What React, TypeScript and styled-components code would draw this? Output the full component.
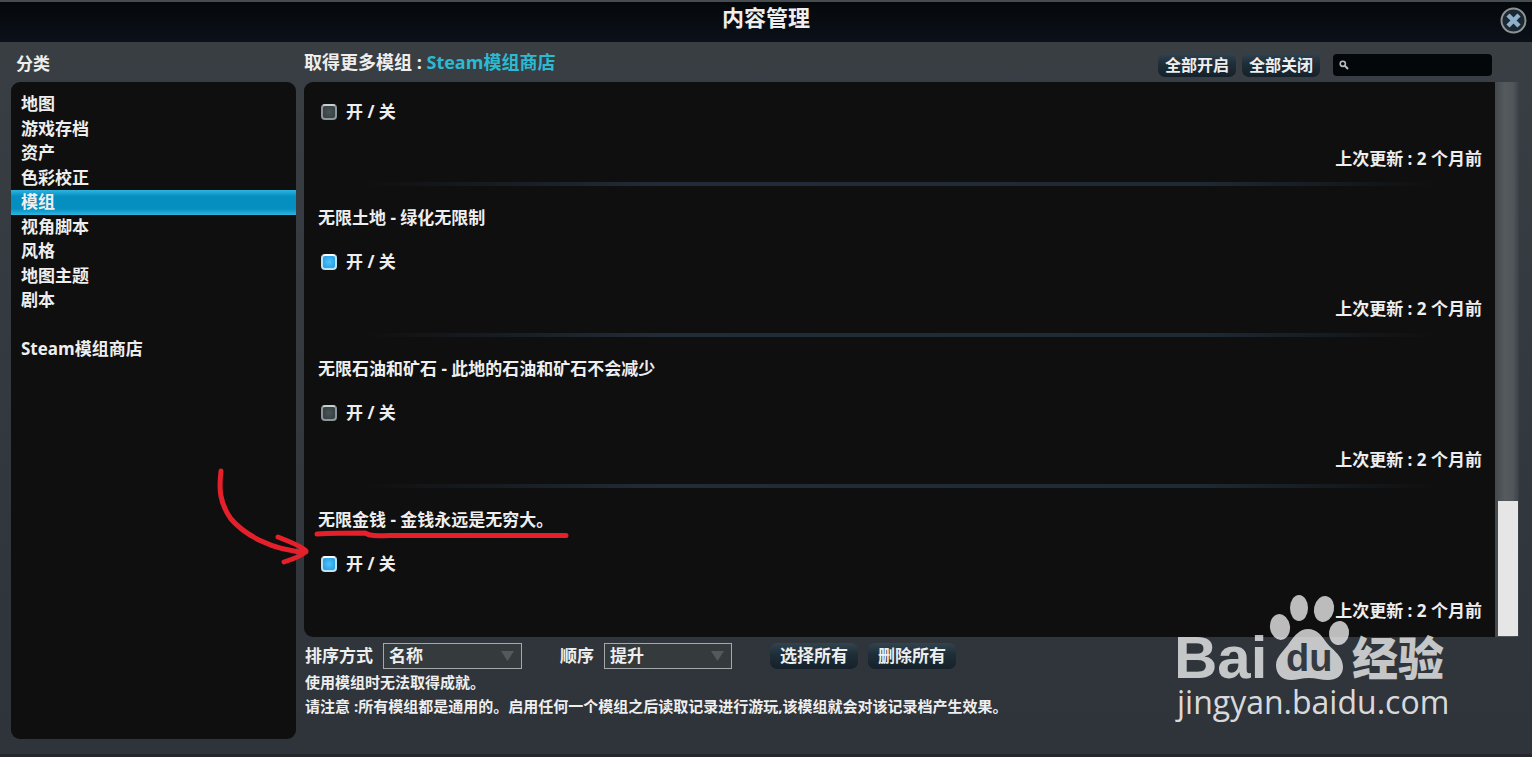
import React, { useState } from 'react';
import styled, { createGlobalStyle } from 'styled-components';

const Global = createGlobalStyle`
  *, *::before, *::after { box-sizing: border-box; }
  body {
    margin: 0;
    background: #30363c;
    color: #eeeeee;
    font-family: "Open Sans", "Noto Sans CJK SC", sans-serif;
    font-size: 17px;
    font-weight: 700;
    line-height: 24px;
  }
  button, input, select { font: inherit; color: inherit; margin: 0; }
  h1, h2, p, ul { margin: 0; padding: 0; font: inherit; list-style: none; }
`;

const Window = styled.div`
  position: relative;
  display: flex;
  flex-direction: column;
  min-height: 100vh;
  overflow: hidden;
  border-bottom: 3px solid #24282d;
  background: linear-gradient(#393f43, #30363c 75%, #2f343b);
`;

const TitleBar = styled.header`
  display: grid;
  grid-template-columns: 1fr auto 1fr;
  align-items: center;
  height: 42px;
  padding: 0 5px;
  border-top: 2px solid #474c50;
  background: linear-gradient(#05080b, #0b1119);
`;

const Title = styled.h1`
  grid-column: 2;
  padding-bottom: 10px;
  font-size: 22px;
  line-height: 28px;
`;

const CloseButton = styled.button`
  justify-self: end;
  width: 27px;
  height: 31px;
  padding: 0 0 4px;
  border: 0;
  background: none;
  svg { display: block; }
`;

const Body = styled.div`
  flex: 1;
  display: grid;
  grid-template-columns: 285px minmax(0, 1fr);
  column-gap: 8px;
  padding: 0 13px 15px 11px;
`;

const Column = styled.div`
  display: flex;
  flex-direction: column;
`;

const Heading = styled.h2`
  height: 40px;
  padding: 10px 5px 0;
`;

const CategoryPanel = styled.nav`
  flex: 1;
  padding: 10px 0;
  border-radius: 9px;
  background: #0f0f0f;
`;

const CategoryList = styled.div`
  display: grid;
  grid-template-rows: repeat(11, 1fr);
  height: 270px;
  a:last-child { grid-row: 11; }
`;

const Category = styled.a<{ $active?: boolean }>`
  padding-left: 10px;
  color: inherit;
  text-decoration: none;
  background: ${p => (p.$active ? 'linear-gradient(#2fb4e0, #048fc0 25%, #048fc0 75%, #2fb4e0)' : 'none')};
`;

const Toolbar = styled.div`
  display: flex;
  align-items: center;
  height: 40px;
  padding: 6px 27px 0 0;
`;

const StoreLine = styled.p`
  margin: 0 auto 6px 0;
  font-size: 18px;
  a { color: #2cb9d2; text-decoration: none; }
`;

const PillButton = styled.button<{ $small?: boolean }>`
  height: ${p => (p.$small ? 24 : 26)}px;
  margin-right: ${p => (p.$small ? 6 : 10)}px;
  padding: 0 ${p => (p.$small ? 7 : 10)}px;
  border: 0;
  border-radius: 7px;
  background: linear-gradient(#31444f, #1e2d37 45%, #15212a);
  font-size: ${p => (p.$small ? 16 : 17)}px;
  line-height: 24px;
`;

const Search = styled.label`
  display: flex;
  align-items: center;
  gap: 4px;
  width: 159px;
  height: 22px;
  margin-left: 7px;
  padding: 0 6px;
  border-radius: 4px;
  background: #04070a;
  input {
    flex: 1;
    min-width: 0;
    border: 0;
    outline: 0;
    background: none;
    font-size: 14px;
  }
`;

const ListArea = styled.div`
  flex: 1;
  display: flex;
`;

const ModList = styled.ul`
  flex: 1;
  border-radius: 9px 0 0 9px;
  background: #0f0f0f;
`;

const ModRow = styled.li<{ $first?: boolean; $last?: boolean }>`
  display: flex;
  flex-direction: column;
  height: ${p => (p.$first ? 104 : p.$last ? 149 : 151)}px;
  padding: ${p => (p.$first ? 18 : 20)}px 13px 0 14px;
  background: ${p => (p.$last ? 'none' : 'linear-gradient(90deg, transparent 5%, #222c38 30%, #1e2a34 75%, transparent 95%) bottom / 100% 4px no-repeat')};
`;

const ModName = styled.h2`
  height: 24px;
  margin-bottom: 20px;
`;

const Toggle = styled.label`
  display: flex;
  align-items: center;
  align-self: flex-start;
  gap: 9px;
  height: 24px;
  padding-left: 3px;
`;

const CheckBox = styled.input`
  appearance: none;
  width: 16px;
  height: 16px;
  border: 2px solid #8d9698;
  border-top-color: #c9d0d2;
  border-radius: 4px;
  background: radial-gradient(#4a5558, #333d40);
  &:checked {
    border-color: #bfe2f5;
    border-top-color: #fff;
    background: radial-gradient(#4fc4fb, #2197e2);
  }
`;

const Updated = styled.p`
  align-self: flex-end;
  margin-top: 23px;
`;

const ScrollTrack = styled.div`
  display: flex;
  align-items: flex-end;
  width: 24px;
  padding: 0 1px 1px 3px;
  background: linear-gradient(90deg, #43494d, #555a5d 40%, #50565a 75%, #3a4046);
`;

const ScrollThumb = styled.div`
  width: 20px;
  height: 135px;
  background: #e6e6e6;
`;

const Footer = styled.footer`
  padding: 5px 1px 21px;
`;

const SortBar = styled.div`
  display: flex;
  align-items: center;
  height: 28px;
`;

const SortField = styled.label`
  display: flex;
  align-items: center;
  gap: 10px;
  margin-right: 38px;
  white-space: nowrap;
`;

const SelectBox = styled.span<{ $width: number }>`
  position: relative;
  width: ${p => p.$width}px;
  height: 26px;
  select {
    appearance: none;
    display: block;
    width: 100%;
    height: 26px;
    padding: 0 5px;
    border: 1px solid #a5a8aa;
    border-radius: 0;
    background: #353a3c;
    line-height: 24px;
  }
  svg { position: absolute; right: 8px; top: 8px; pointer-events: none; }
`;

const Note = styled.p`
  height: 24px;
  font-size: 15px;
`;

const Annotation = styled.svg`
  position: absolute;
  left: 200px;
  top: 460px;
  pointer-events: none;
`;

const Watermark = styled.svg`
  position: absolute;
  right: 74px;
  top: 592px;
  pointer-events: none;
`;

const mods = [
  { name: '', on: false },
  { name: '无限土地 - 绿化无限制', on: true },
  { name: '无限石油和矿石 - 此地的石油和矿石不会减少', on: false },
  { name: '无限金钱 - 金钱永远是无穷大。', on: true },
];

const categories = ['地图', '游戏存档', '资产', '色彩校正', '模组', '视角脚本', '风格', '地图主题', '剧本', 'Steam模组商店'];

const Caret = () => (
  <svg width="13" height="10" viewBox="0 0 13 10"><path d="M0 0h13L6.500 10z" fill="#54595c" /></svg>
);

function Mod({ name, on, last }: { name: string; on: boolean; last: boolean }) {
  const [checked, setChecked] = useState(on);
  return (
    <ModRow $first={!name} $last={last}>
      {name && <ModName>{name}</ModName>}
      <Toggle>
        <CheckBox type="checkbox" checked={checked} onChange={() => setChecked(!checked)} />
        开 / 关
      </Toggle>
      <Updated>上次更新 : 2 个月前</Updated>
    </ModRow>
  );
}

const BaiduLogo = () => (
  <Watermark width="290" height="140" viewBox="-8 0 290 140" fill="#fff" fillOpacity="0.72">
    <text x="-2" y="86" fontFamily="Liberation Sans, sans-serif" fontSize="60" fontWeight="700">Bai</text>
    <ellipse cx="104" cy="35" rx="10" ry="13" transform="rotate(-8 104 35)" />
    <ellipse cx="123" cy="16" rx="9" ry="13" />
    <ellipse cx="148" cy="17" rx="10" ry="13" transform="rotate(12 148 17)" />
    <ellipse cx="163" cy="41" rx="10" ry="12" transform="rotate(8 163 41)" />
    <path d="M132 37C141 37 146 44 150 50C155 57 167 63 167 75C167 84 160 88 152 88C145 88 140 86 133 86C126 86 121 88 115 88C106 88 100 82 100 73C100 64 109 58 114 50C119 43 124 37 132 37Z" />
    <text x="110" y="79" fontFamily="Liberation Sans, sans-serif" fontSize="38" fontWeight="700" fill="#343a40" fillOpacity="1">du</text>
    <text x="176" y="83" fontFamily="Noto Sans CJK SC, sans-serif" fontSize="46" fontWeight="900">经验</text>
    <text x="1" y="122" fontFamily="Open Sans, sans-serif" fontSize="32" fontWeight="500" fillOpacity="0.84">jingyan.baidu.com</text>
  </Watermark>
);

export default function App() {
  return (
    <Window>
      <Global />
      <TitleBar>
        <Title>内容管理</Title>
        <CloseButton aria-label="关闭">
          <svg width="27" height="27" viewBox="0 0 27 27">
            <circle cx="13.500" cy="13.500" r="12" fill="#1b2731" stroke="#8d9295" strokeWidth="2" />
            <path d="M8 8l11 11M19 8L8 19" stroke="#8fb0ca" strokeWidth="4.500" />
          </svg>
        </CloseButton>
      </TitleBar>
      <Body>
        <Column>
          <Heading>分类</Heading>
          <CategoryPanel>
            <CategoryList>
              {categories.map(c => (
                <Category key={c} href="#" $active={c === '模组'}>{c}</Category>
              ))}
            </CategoryList>
          </CategoryPanel>
        </Column>
        <Column>
          <Toolbar>
            <StoreLine>取得更多模组 : <a href="#">Steam模组商店</a></StoreLine>
            <PillButton $small>全部开启</PillButton>
            <PillButton $small>全部关闭</PillButton>
            <Search>
              <svg width="10" height="10" viewBox="0 0 10 10" fill="none" stroke="#b9bcbe">
                <circle cx="3.800" cy="3.800" r="2.600" strokeWidth="1.600" />
                <path d="M5.800 5.800L9 9" strokeWidth="2" />
              </svg>
              <input aria-label="搜索" />
            </Search>
          </Toolbar>
          <ListArea>
            <ModList>
              {mods.map((m, i) => (
                <Mod key={i} {...m} last={i === mods.length - 1} />
              ))}
            </ModList>
            <ScrollTrack><ScrollThumb /></ScrollTrack>
          </ListArea>
          <Footer>
            <SortBar>
              <SortField>
                排序方式
                <SelectBox $width={139}><select><option>名称</option></select><Caret /></SelectBox>
              </SortField>
              <SortField>
                顺序
                <SelectBox $width={128}><select><option>提升</option></select><Caret /></SelectBox>
              </SortField>
              <PillButton>选择所有</PillButton>
              <PillButton>删除所有</PillButton>
            </SortBar>
            <Note>使用模组时无法取得成就。</Note>
            <Note>请注意 :所有模组都是通用的。启用任何一个模组之后读取记录进行游玩,该模组就会对该记录档产生效果。</Note>
          </Footer>
        </Column>
      </Body>
      <Annotation width="372" height="110" viewBox="0 0 372 110" fill="none" stroke="#e5202b" strokeWidth="5" strokeLinecap="round" strokeLinejoin="round">
        <path d="M21 11C19 28 19 42 31 59C44 74 72 91 106 92M78 77C88 81 104 87 106 91C104 95 93 99 84 102" />
        <path d="M117 74C135 73 150 73 165 73C170 76 175 76 190 75.500H366" />
      </Annotation>
      <BaiduLogo />
    </Window>
  );
}
